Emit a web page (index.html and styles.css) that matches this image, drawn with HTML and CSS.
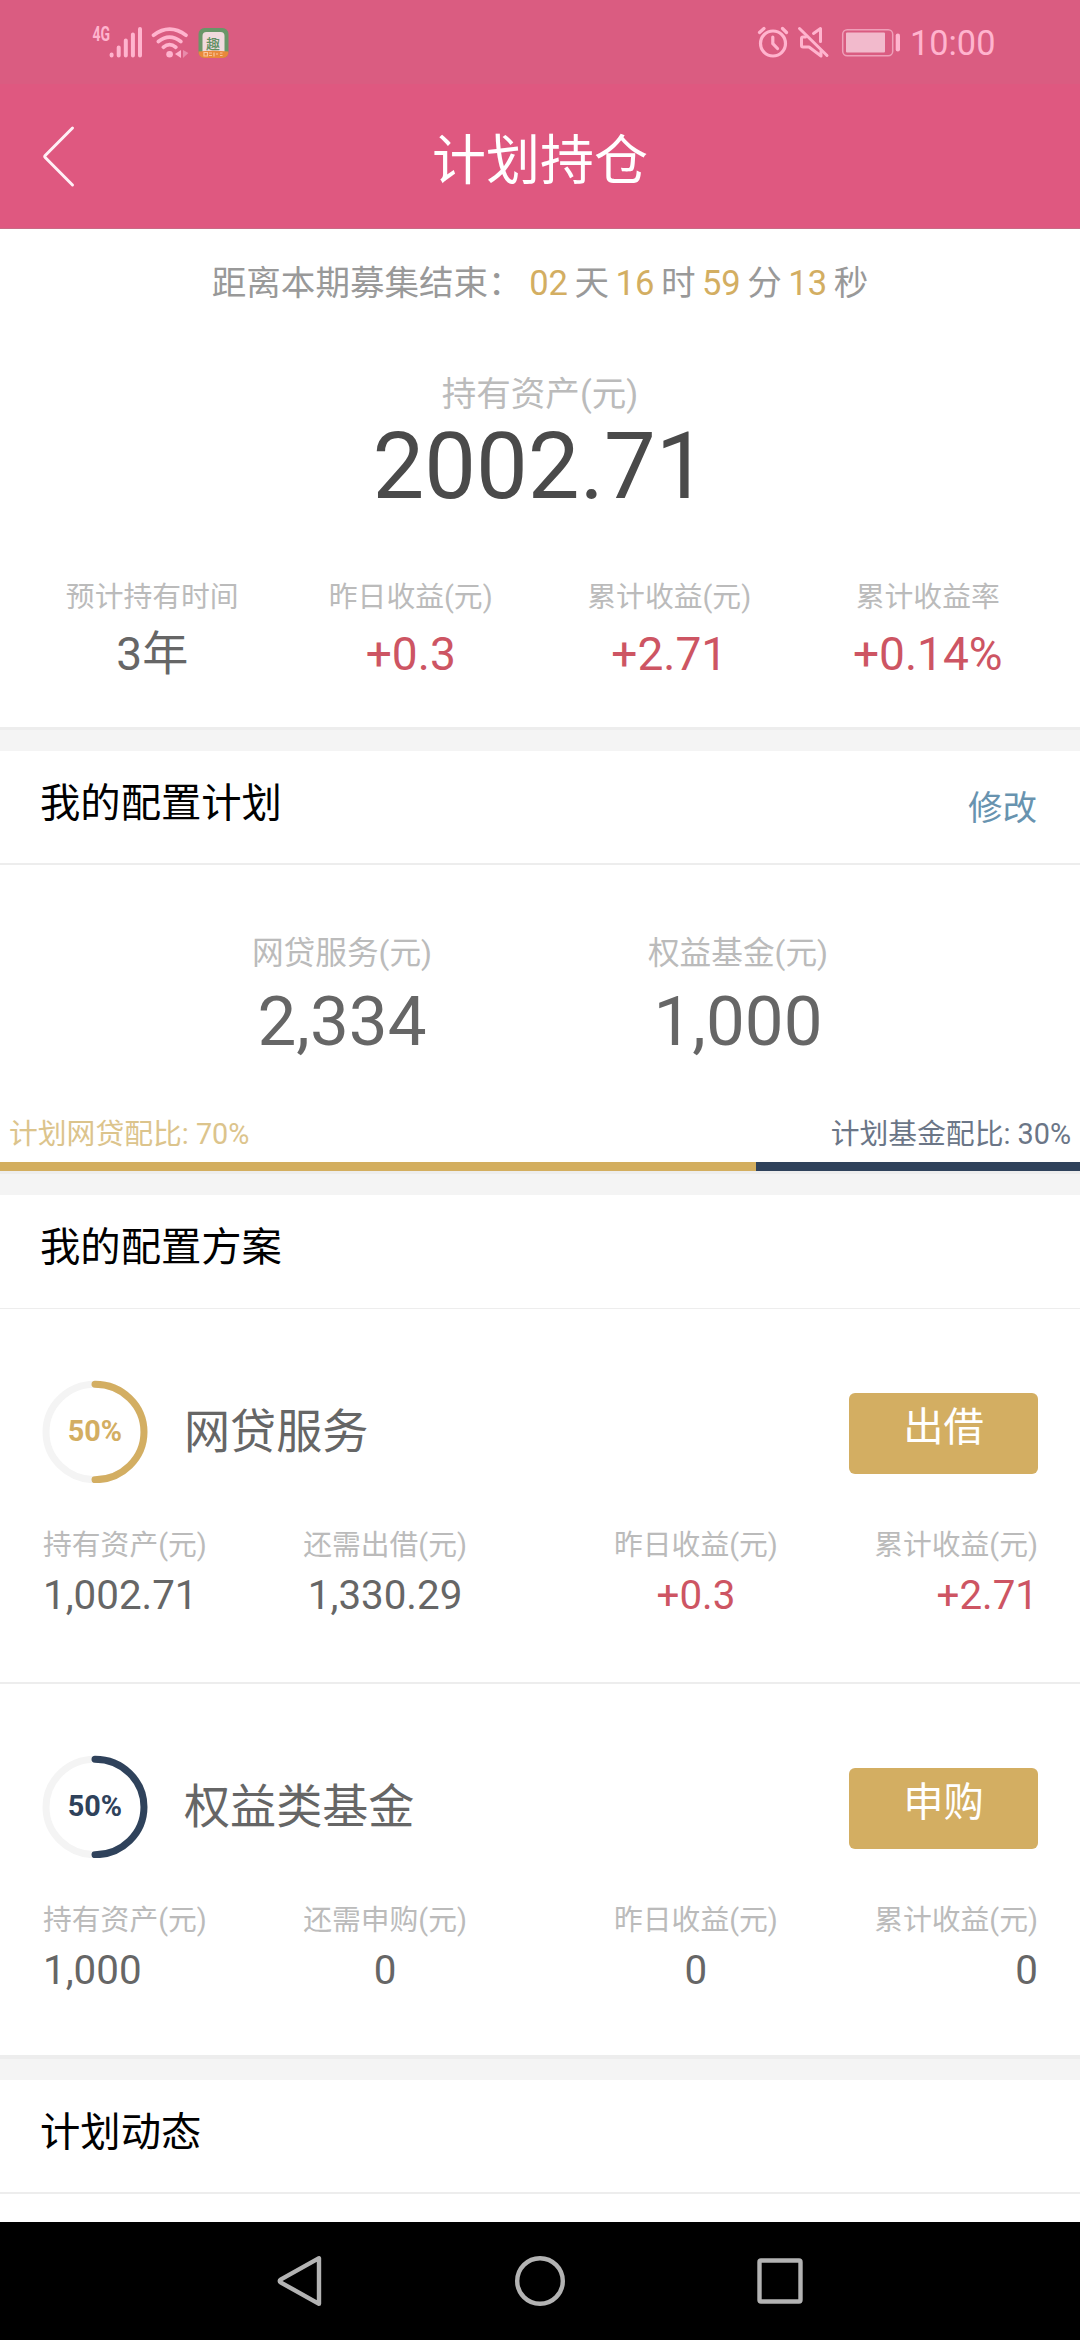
FILE: index.html
```html
<!DOCTYPE html>
<html lang="zh-CN">
<head>
<meta charset="utf-8">
<title>计划持仓</title>
<link rel="stylesheet" href="styles.css">
</head>
<body>
<div class="phone">
  <div class="status">
    <div class="status-left">
      <svg class="signal" width="54" height="45" viewBox="89 14 54 45">
        <text class="net" x="92.5" y="41" textLength="17.5" lengthAdjust="spacingAndGlyphs">4G</text>
        <g stroke="#ffb4ce" stroke-width="4" stroke-linecap="round">
          <path d="M111.6 54.5V55.5M118.7 47.5V55.5M125.8 40.5V55.5M132.9 34.5V55.5M140 29V55.5"/>
        </g>
      </svg>
      <svg class="wifi" width="38" height="34" viewBox="151 25 38 34">
        <g fill="none" stroke="#ffb4ce" stroke-width="3.7" stroke-linecap="round">
          <path d="M153.5 35.2Q169.5 23.2 186 35.2M158.4 41.5Q169.5 32.8 180.8 41.5M163.4 47.2Q169.5 42.2 175.8 47.2"/>
        </g>
        <circle cx="169.6" cy="54.3" r="3.3" fill="#ffb4ce"/>
        <path d="M181 50V58L175 54Z" fill="#ffb4ce"/>
        <path d="M183 50V58L188.4 53Z" fill="#e88cab"/>
      </svg>
      <svg class="app" width="31" height="32" viewBox="0 0 31 32">
        <rect x=".5" y="1" width="30" height="30" rx="6" fill="#699668"/>
        <rect x="4.5" y="5" width="22" height="24" rx="4" fill="#f0dadd"/>
        <text class="app-char" x="8" y="21.5">趣</text>
        <path d="M.5 24.5Q15.5 23 30.5 24.5Q30.5 31 24.5 31H6.5Q.5 31 .5 24.5Z" fill="#e9893a"/>
        <path d="M6 25.5h3.5v3.5h-3.5zM11 26h3M11 28.5h3M16 25.5v4M18 27h2M22 26h2.5M22 28.5h2.5" fill="none" stroke="#fbc79a" stroke-width="1.2"/>
      </svg>
    </div>
    <div class="status-right">
      <svg width="32" height="34" viewBox="756 25 32 34" fill="none" stroke="#ffb4ce" stroke-linecap="round">
        <circle cx="772" cy="43.5" r="12.5" stroke-width="3.2"/>
        <path d="M771.8 37V43.5L776.5 48.5" stroke-width="3.2"/>
        <path d="M758.5 32.5L763 28.5M785.5 32.5L781.5 28.5" stroke-width="3.2"/>
      </svg>
      <svg class="mute" width="33" height="34" viewBox="796 25 33 34" fill="none" stroke="#ffb4ce" stroke-width="3" stroke-linecap="round" stroke-linejoin="round">
        <path d="M798.5 28.5L826 55.5"/>
        <path d="M804.5 37H802Q800.5 37 800.5 38.5V45.5Q800.5 47 802 47H808L820 56V51M812.5 33.5L819.500 28.5V41.5"/>
      </svg>
      <svg class="battery" width="60" height="30" viewBox="840 28 60 30">
        <rect x="841.7" y="29.7" width="50" height="26" rx="4.5" fill="none" stroke="#ef9fb9" stroke-width="1.5"/>
        <rect x="845" y="32.5" width="39" height="20" rx="1" fill="#f2bacc"/>
        <rect x="894.7" y="33.5" width="4.3" height="18" rx="2.1" fill="#ffb4ce"/>
      </svg>
      <span class="clock">10:00</span>
    </div>
  </div>

  <header class="header">
    <svg class="back" width="34" height="64" viewBox="0 0 34 64" fill="none" stroke="#fff0f6" stroke-width="3" stroke-linecap="round" stroke-linejoin="round"><path d="M30.5 3L3.2 30.5Q2.2 31.5 3.2 32.5L30.5 60"/></svg>
    <h1 class="title">计划持仓</h1>
  </header>

  <section class="summary">
    <p class="countdown">距离本期募集结束：<b>02</b>天<b>16</b>时<b>59</b>分<b>13</b>秒</p>
    <p class="total-label">持有资产(元)</p>
    <p class="total">2002.71</p>
    <div class="stats">
      <div><p class="label">预计持有时间</p><p class="stat">3年</p></div>
      <div><p class="label">昨日收益(元)</p><p class="stat up">+0.3</p></div>
      <div><p class="label">累计收益(元)</p><p class="stat up">+2.71</p></div>
      <div><p class="label">累计收益率</p><p class="stat up">+0.14%</p></div>
    </div>
  </section>

  <section class="block">
    <div class="block-head"><h2>我的配置计划</h2><a class="edit">修改</a></div>
    <div class="plan">
      <div><p class="plan-label">网贷服务(元)</p><p class="plan-value">2,334</p></div>
      <div><p class="plan-label">权益基金(元)</p><p class="plan-value">1,000</p></div>
    </div>
    <div class="ratio"><span class="ratio-loan">计划网贷配比: 70%</span><span class="ratio-fund">计划基金配比: 30%</span></div>
    <div class="bar"><div class="bar-fill" style="width:70%"></div></div>
  </section>

  <section class="block">
    <div class="block-head thin"><h2>我的配置方案</h2></div>
    <article class="item">
      <div class="item-top">
        <svg class="ring gold" viewBox="0 0 106 103" width="106" height="103">
          <ellipse class="track" cx="53" cy="52" rx="49" ry="47.7"/>
          <path class="arc" d="M53 4.3A49 47.7 0 0 1 53 99.7"/>
          <text x="53" y="61">50%</text>
        </svg>
        <h3>网贷服务</h3>
        <button class="btn">出借</button>
      </div>
      <div class="cells">
        <div class="pair">
          <div><p class="label">持有资产(元)</p><p class="value start">1,002.71</p></div>
          <div><p class="label">还需出借(元)</p><p class="value">1,330.29</p></div>
        </div>
        <div class="pair">
          <div><p class="label">昨日收益(元)</p><p class="value up">+0.3</p></div>
          <div><p class="label">累计收益(元)</p><p class="value end up">+2.71</p></div>
        </div>
      </div>
    </article>
    <article class="item last">
      <div class="item-top">
        <svg class="ring navy" viewBox="0 0 106 103" width="106" height="103">
          <ellipse class="track" cx="53" cy="52" rx="49" ry="47.7"/>
          <path class="arc" d="M53 4.3A49 47.7 0 0 1 53 99.7"/>
          <text x="53" y="61">50%</text>
        </svg>
        <h3>权益类基金</h3>
        <button class="btn">申购</button>
      </div>
      <div class="cells">
        <div class="pair">
          <div><p class="label">持有资产(元)</p><p class="value start">1,000</p></div>
          <div><p class="label">还需申购(元)</p><p class="value">0</p></div>
        </div>
        <div class="pair">
          <div><p class="label">昨日收益(元)</p><p class="value">0</p></div>
          <div><p class="label">累计收益(元)</p><p class="value end">0</p></div>
        </div>
      </div>
    </article>
  </section>

  <section class="block feed">
    <div class="block-head"><h2>计划动态</h2></div>
  </section>

  <nav class="nav">
    <svg width="60" height="60" viewBox="0 0 60 60"><path d="M49 7.2V52.8L11 31.6Q8.4 30 11 28.4Z"/></svg>
    <svg width="60" height="60" viewBox="0 0 60 60"><circle cx="30" cy="30" r="22.8"/></svg>
    <svg width="60" height="60" viewBox="0 0 60 60"><rect x="9.5" y="9.5" width="41" height="41" rx="1.5"/></svg>
  </nav>
</div>
</body>
</html>
```

FILE: styles.css
```css
* { box-sizing: border-box; margin: 0; padding: 0; }
body { background: #fff; font-family: Roboto, "Noto Sans CJK SC", sans-serif; color: #666; }
svg { display: block; flex: none; }
h1, h2, h3 { font-weight: 400; }

.phone { width: 1080px; height: 2340px; display: flex; flex-direction: column; overflow: hidden; }

.status { height: 84px; flex: none; background: #da5c81; display: flex; justify-content: space-between; }
.status-left { display: flex; align-items: flex-start; padding: 14px 0 0 89px; }
.net { font: 700 20px Roboto, sans-serif; fill: #ffb4ce; }
.wifi { margin: 11px 0 0 8px; }
.app { margin: 13px 0 0 9px; }
.app-char { font: 500 14px "Noto Sans CJK SC", sans-serif; fill: #5f8f62; }
.status-right { display: flex; padding: 25px 86px 0 0; }
.mute { margin-left: 8px; }
.battery { margin: 3px 0 0 11px; }
.clock { margin-left: 9px; width: 84px; font-size: 34.3px; line-height: 36px; color: #ffb4ce; white-space: nowrap; }

.header { height: 145px; flex: none; background: #df5880; border-bottom: 1px solid #c96a85; display: grid; grid-template-columns: 90px 1fr 90px; }
.back { margin: 41px 0 0 42px; }
.title { font-size: 54px; line-height: 156px; height: 144px; text-align: center; color: #fff; }

.summary { height: 498px; flex: none; padding-top: 30px; text-align: center; }
.countdown { font-size: 34.56px; line-height: 48px; color: #999; }
.countdown b { font-weight: 400; color: #d3ae62; margin: 0 6.5px; }
.total-label { margin-top: 63px; font-size: 34.56px; line-height: 48px; color: #bbb; }
.total { font-size: 92.16px; line-height: 97px; color: #4a4a4a; }
.stats { margin-top: 62px; padding: 0 23px; display: grid; grid-template-columns: repeat(4, 1fr); }
.label { font-size: 28.8px; line-height: 40px; color: #bbb; white-space: nowrap; }
.stat { margin-top: 7px; font-size: 46.08px; line-height: 60px; }
.up { color: #cd5563; }

.block { flex: none; border-top: 3px solid #ededed; }
.block::before { content: ""; display: block; height: 21px; background: #f4f4f4; }
.block-head { height: 114px; padding: 0 43px 0 40px; border-bottom: 2px solid #ededed; display: flex; justify-content: space-between; }
.block-head.thin { border-bottom-width: 1px; }
h2 { font-size: 40.32px; line-height: 105px; color: #000; }
.edit { font-size: 34.56px; line-height: 115px; color: #6893af; }

.plan { padding: 67px 144px 0; display: grid; grid-template-columns: 1fr 1fr; text-align: center; }
.plan-label { font-size: 31.68px; line-height: 44px; color: #bbb; }
.plan-value { margin-top: 5px; font-size: 69.12px; line-height: 81px; }
.ratio { margin-top: 52px; height: 48px; padding: 0 9px; display: flex; justify-content: space-between; font-size: 28.8px; line-height: 40px; }
.ratio-loan { color: #dcc48c; }
.ratio-fund { color: #6b7687; }
.bar { height: 9px; background: #2f425b; }
.bar-fill { height: 9px; background: #d3ae5f; }

.item { height: 375px; padding: 71px 42px 0 43px; border-bottom: 2px solid #ededed; }
.item.last { height: 371px; border-bottom: 0; }
.item-top { height: 103px; display: flex; align-items: center; }
.ring { margin-left: -1px; }
.ring .track, .ring .arc { fill: none; stroke-width: 7; }
.ring .track { stroke: #f4f4f4; }
.ring .arc { stroke: currentColor; stroke-linecap: round; }
.ring text { font: 700 28.8px Roboto, sans-serif; text-anchor: middle; fill: currentColor; }
.gold { color: #d3ae62; }
.navy { color: #2f425b; }
h3 { margin-left: 36px; font-size: 46.08px; line-height: 60px; }
.btn { margin: 3px 0 0 auto; width: 189px; height: 81px; padding: 0 0 12px; border: 0; border-radius: 6px; background: #d3ae62; color: #fff; font: 40.32px/69px Roboto, "Noto Sans CJK SC", sans-serif; }
.cells { margin-top: 42px; display: flex; justify-content: space-between; }
.pair { width: 424px; display: flex; justify-content: space-between; }
.value { margin-top: 5px; font-size: 40.32px; line-height: 51px; text-align: center; }
.value.start { text-align: left; }
.value.end { text-align: right; }

.feed { flex: 1; min-height: 0; border-top-width: 4px; }

.nav { height: 118px; flex: none; background: #000; display: flex; justify-content: center; align-items: center; gap: 180px; }
.nav svg { fill: none; stroke: #b3b3b3; stroke-width: 4.4; stroke-linejoin: round; }
```
